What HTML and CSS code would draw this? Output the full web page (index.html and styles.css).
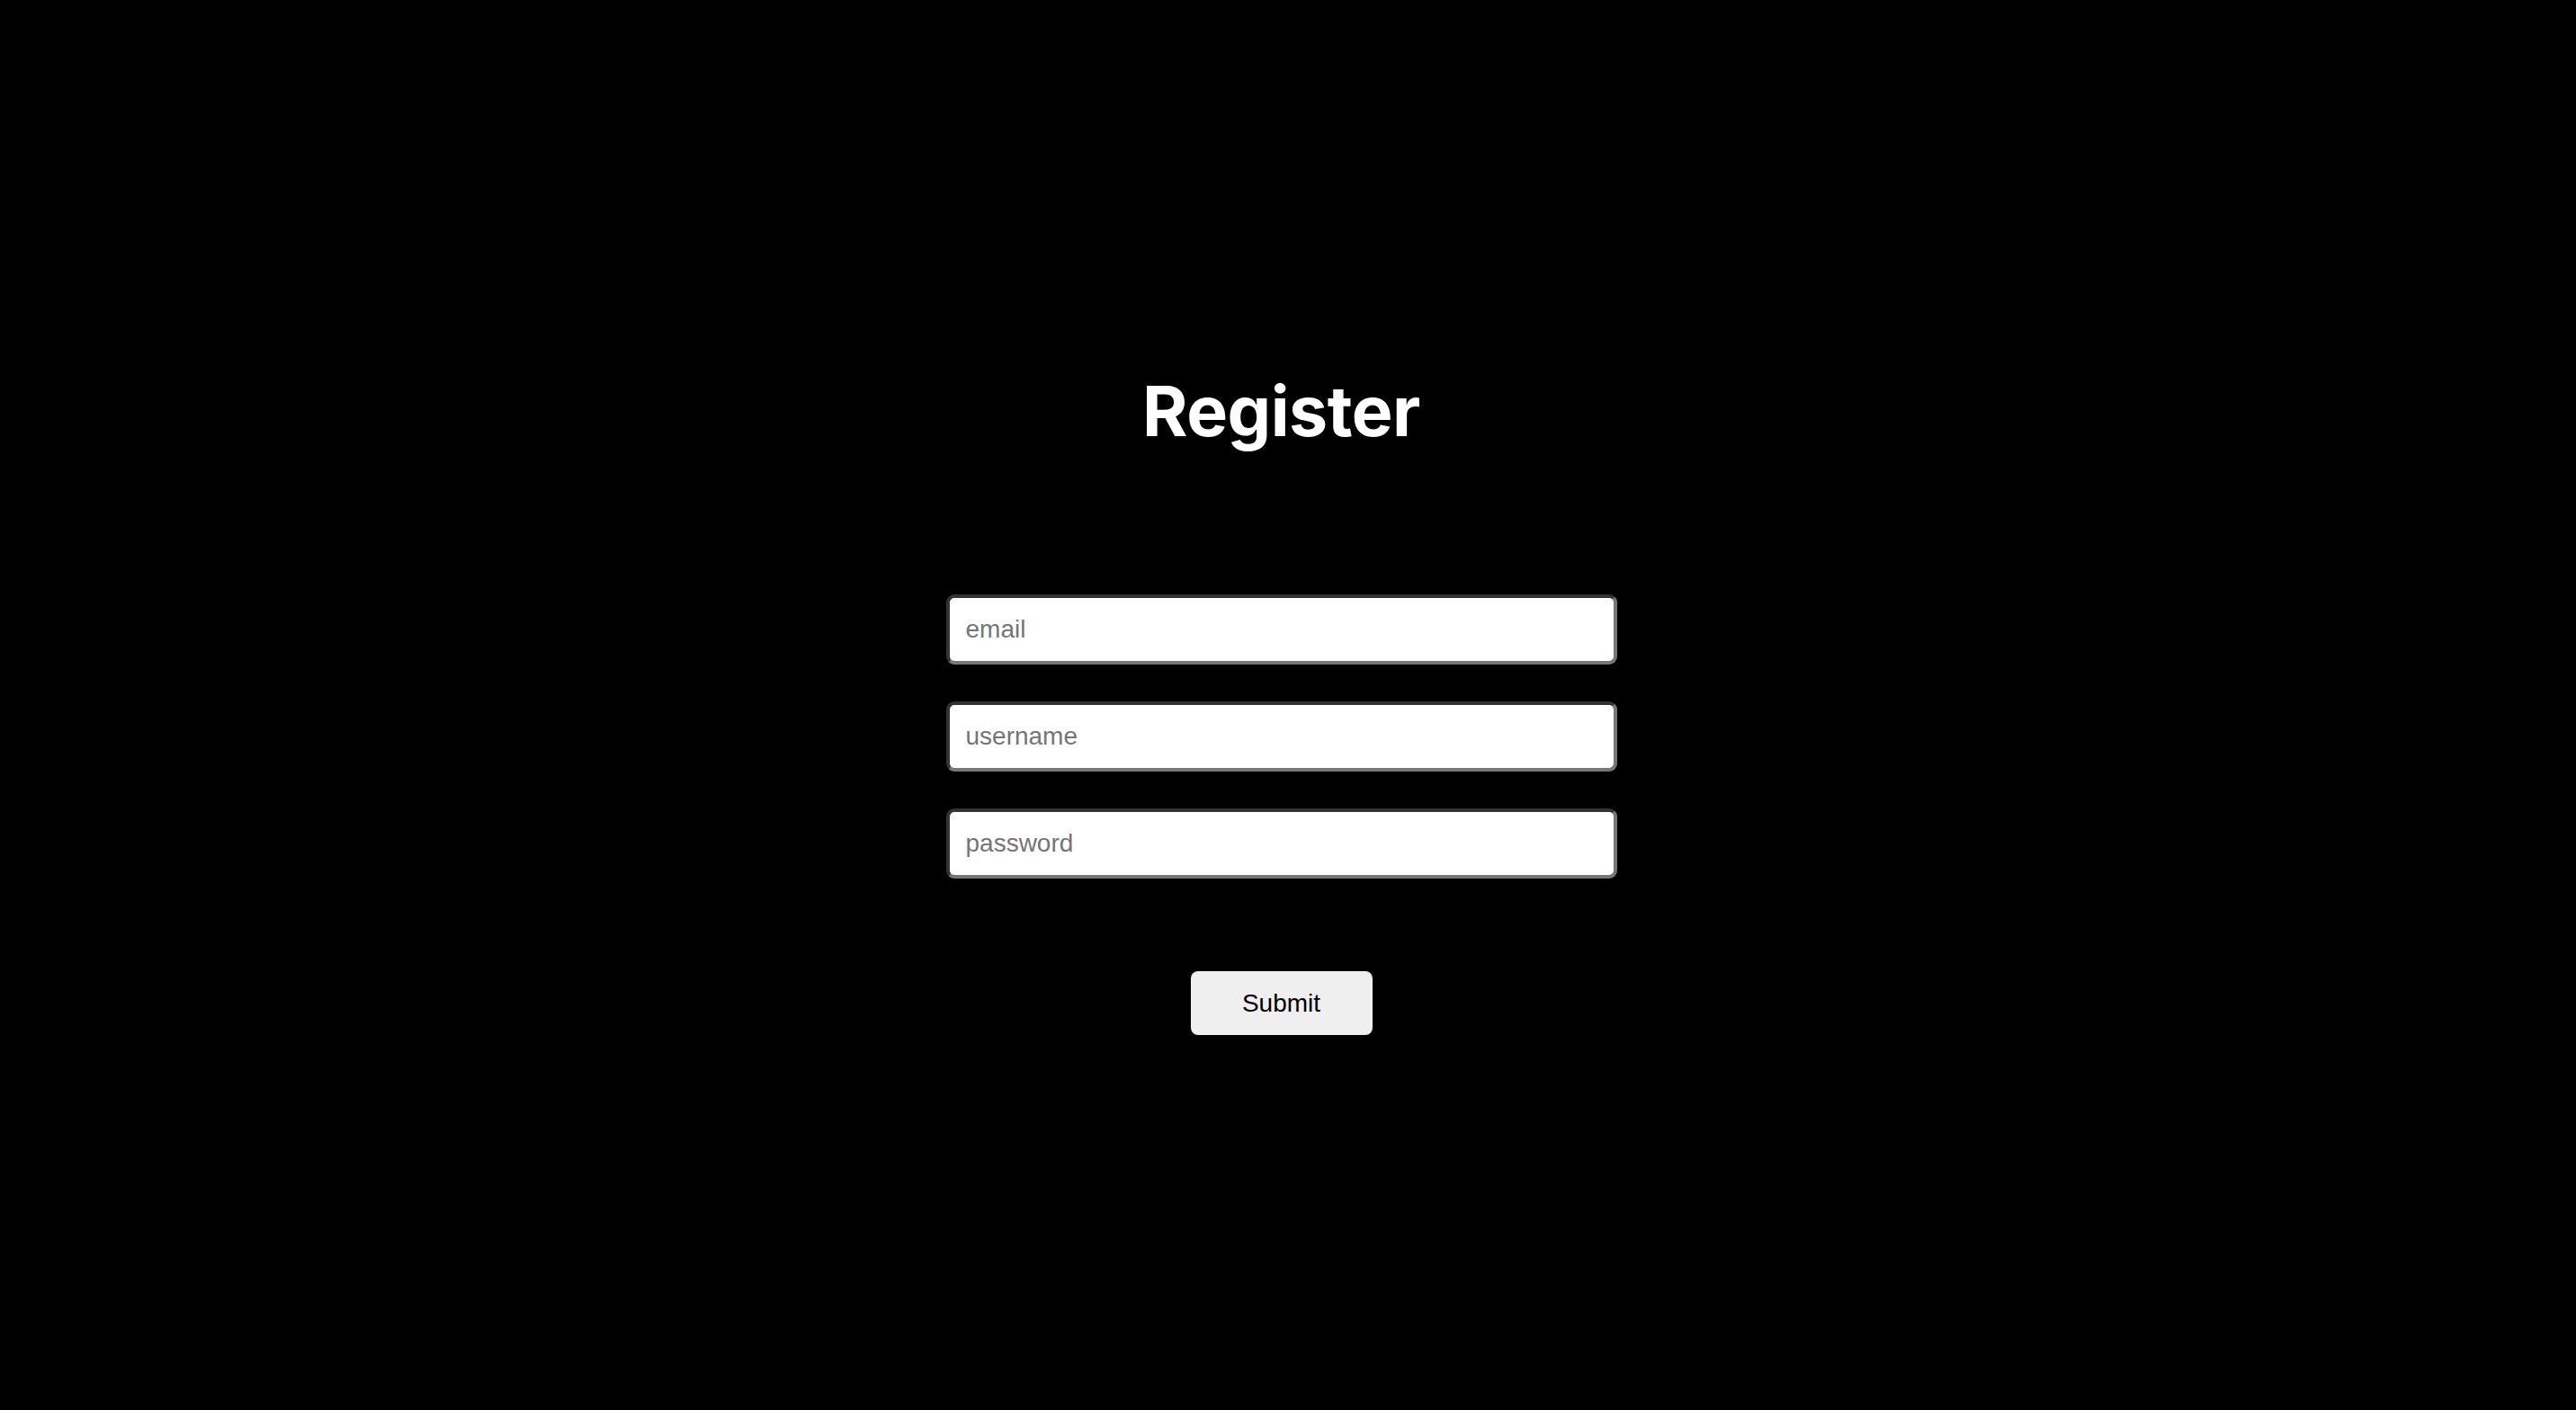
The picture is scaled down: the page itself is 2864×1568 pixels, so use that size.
FILE: index.html
```html
<!DOCTYPE html>
<html lang="en">
<head>
<meta charset="utf-8">
<title>Register</title>
<link rel="stylesheet" href="styles.css">
</head>
<body>
<main class="page">
  <h1 class="title">Register</h1>
  <form class="form">
    <div class="fields">
      <input class="field" type="email" placeholder="email">
      <input class="field" type="text" placeholder="username">
      <input class="field" type="password" placeholder="password">
    </div>
    <button class="submit" type="button">Submit</button>
  </form>
</main>
</body>
</html>
```
FILE: styles.css
```css
html, body {
  margin: 0;
  padding: 0;
  background: #000;
  height: 100%;
}
.page {
  display: flex;
  flex-direction: column;
  align-items: center;
  padding-top: 410px;
  padding-right: 15px;
}
.title {
  margin: 0;
  font-family: Inter, "Liberation Sans", sans-serif;
  font-weight: 700;
  font-size: 77px;
  line-height: 94px;
  color: #fff;
  letter-spacing: -0.5px;
}
.form {
  margin-top: 157px;
  display: flex;
  flex-direction: column;
  align-items: center;
}
.fields {
  display: flex;
  flex-direction: column;
  gap: 41px;
}
.field {
  box-sizing: border-box;
  width: 746px;
  height: 78px;
  border-style: solid;
  border-width: 4px;
  border-color: #333 #777 #777 #333;
  border-radius: 9px;
  background: #fff;
  padding: 0 18px;
  font-family: "Liberation Sans", Arial, sans-serif;
  font-size: 28px;
  color: #000;
  outline: none;
}
.field::placeholder {
  color: #757575;
}
.submit {
  margin-top: 103px;
  width: 202px;
  height: 71px;
  border: none;
  border-radius: 8px;
  background: #efefef;
  font-family: "Liberation Sans", Arial, sans-serif;
  font-size: 28px;
  color: #000;
  padding: 0;
}
```
